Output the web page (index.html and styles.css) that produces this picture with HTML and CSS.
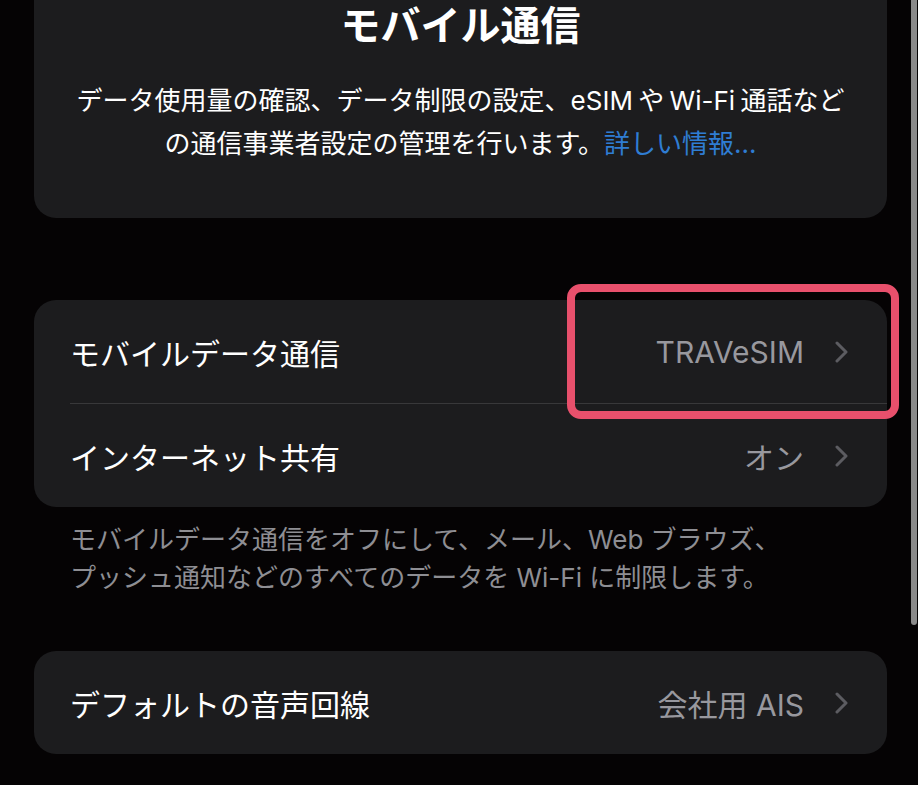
FILE: index.html
```html
<!DOCTYPE html>
<html lang="ja">
<head>
    <meta charset="UTF-8">
    <meta name="viewport" content="width=device-width, initial-scale=1.0">
    <title>モバイル通信</title>
    <link rel="stylesheet" href="styles.css">
</head>
<body>
    <div class="page">
        <div class="intro">
            <h1>モバイル通信</h1>
            <p class="desc">データ使用量の確認、データ制限の設定、eSIM や Wi-Fi 通話など<br>の通信事業者設定の管理を行います。<a href="#" onclick="return false">詳しい情報...</a></p>
        </div>

        <div class="group">
            <div class="row">
                <span class="label">モバイルデータ通信</span>
                <span class="value">TRAVeSIM</span>
                <svg class="chevron" width="13" height="22" viewBox="0 0 13 22"><path d="M2 2 L11 11 L2 20" fill="none" stroke="#5c5c61" stroke-width="3" stroke-linecap="round" stroke-linejoin="round"/></svg>
            </div>
            <div class="row">
                <span class="label">インターネット共有</span>
                <span class="value">オン</span>
                <svg class="chevron" width="13" height="22" viewBox="0 0 13 22"><path d="M2 2 L11 11 L2 20" fill="none" stroke="#5c5c61" stroke-width="3" stroke-linecap="round" stroke-linejoin="round"/></svg>
            </div>
            <div class="highlight"></div>
        </div>
        <p class="note">モバイルデータ通信をオフにして、メール、Web ブラウズ、<br>プッシュ通知などのすべてのデータを Wi-Fi に制限します。</p>

        <div class="group last">
            <div class="row">
                <span class="label">デフォルトの音声回線</span>
                <span class="value">会社用 AIS</span>
                <svg class="chevron" width="13" height="22" viewBox="0 0 13 22"><path d="M2 2 L11 11 L2 20" fill="none" stroke="#5c5c61" stroke-width="3" stroke-linecap="round" stroke-linejoin="round"/></svg>
            </div>
        </div>
    </div>
    <div class="scrollbar"></div>
</body>
</html>
```

FILE: styles.css
```css
body {
    margin: 0;
    background: #050304;
    color: #fff;
    font-family: Inter, "Noto Sans CJK JP", sans-serif;
    height: 785px;
    overflow: hidden;
}
.page {
    padding: 0 31px 0 34px;
}
.intro {
    background: #1c1c1e;
    height: 218px;
    border-radius: 0 0 22px 22px;
    text-align: center;
    padding-top: 1px;
    box-sizing: border-box;
}
.intro h1 {
    margin: 0;
    font-size: 40px;
    line-height: 50px;
    font-weight: 700;
}
.desc {
    margin: 28px 0 0;
    font-size: 26px;
    line-height: 43px;
    word-spacing: -2px;
}
.desc a {
    color: #2f7dd3;
    text-decoration: none;
}
.group {
    position: relative;
    background: #1c1c1e;
    border-radius: 22px;
    margin-top: 82px;
}
.group.last {
    margin-top: 54px;
}
.row {
    display: flex;
    align-items: center;
    height: 103px;
    margin-left: 36px;
    padding-right: 39px;
}
.row + .row {
    border-top: 1px solid #38383a;
}
.label {
    flex: 1;
    font-size: 30px;
}
.value {
    color: #98989e;
    font-size: 30px;
    margin-right: 31px;
}
.chevron {
    display: block;
}
.note {
    margin: 0;
    padding: 14px 0 0 36px;
    color: #8e8e93;
    font-size: 26px;
    line-height: 38px;
}
.highlight {
    position: absolute;
    left: 533px;
    top: -16px;
    width: 316px;
    height: 119px;
    border: 8px solid #e8506c;
    border-radius: 14px;
}
.scrollbar {
    position: absolute;
    right: 1px;
    top: 0;
    width: 6px;
    height: 625px;
    background: #8a8a8a;
    border-radius: 0 0 3px 3px;
}
```
